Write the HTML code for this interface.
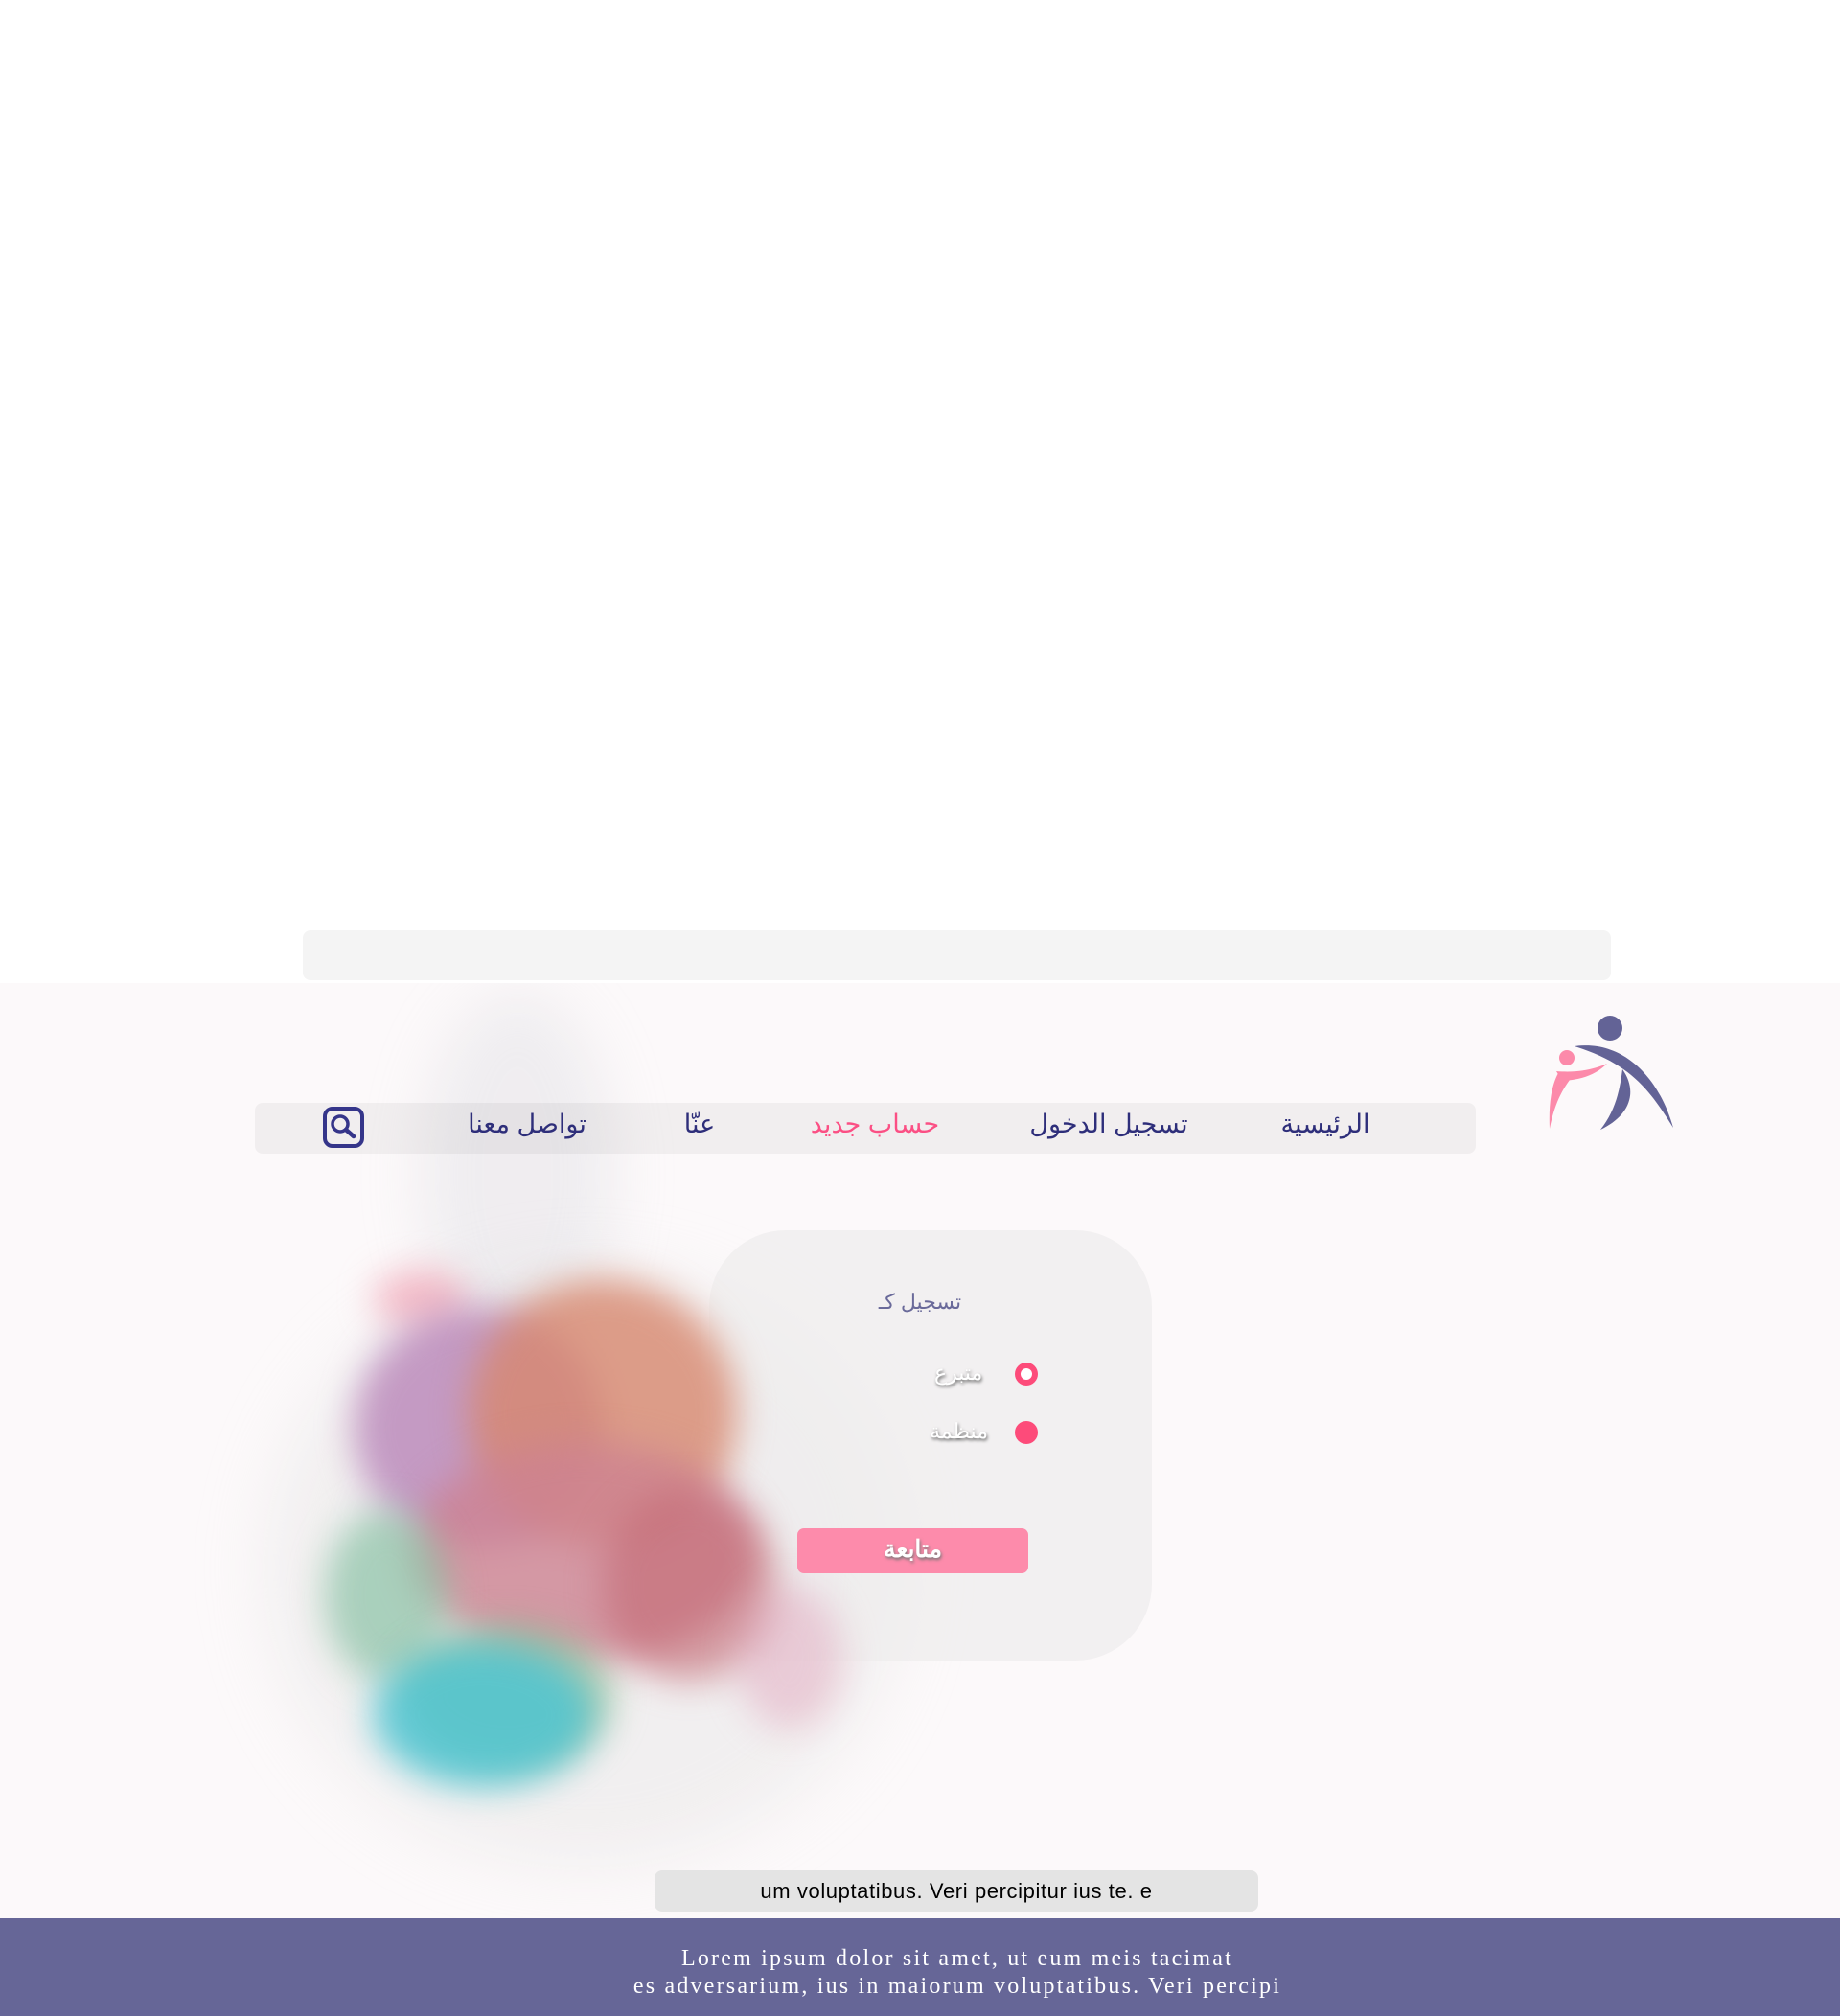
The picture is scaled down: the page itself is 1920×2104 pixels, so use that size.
<!DOCTYPE html>
<html><head><meta charset="utf-8">
<style>
html,body{margin:0;padding:0;}
body{width:1920px;height:2104px;position:relative;background:#fff;overflow:hidden;font-family:"Liberation Sans","Noto Sans CJK SC",sans-serif;}
.abs{position:absolute;}
.pat{left:0;top:1026px;width:1920px;height:976px;background:#fcf9fa;overflow:hidden;}
.nav a{position:absolute;top:1158px;font-size:27px;color:#2e2e7a;text-decoration:none;transform:translateX(-50%);white-space:nowrap;direction:rtl;}
.blob{position:absolute;border-radius:50%;filter:blur(18px);}
</style></head><body>
<div class="abs" style="left:316px;top:971px;width:1365px;height:52px;background:#f4f4f4;border-radius:8px;"></div>
<div class="abs pat">
 <div class="blob" style="left:440px;top:10px;width:200px;height:380px;background:rgba(205,205,210,.25);filter:blur(30px)"></div>
 <div class="blob" style="left:280px;top:300px;width:660px;height:620px;background:rgba(220,220,222,.35);filter:blur(35px)"></div>
</div>
<!-- nav -->
<div class="abs" style="left:266px;top:1151px;width:1274px;height:53px;background:rgba(0,0,0,.045);border-radius:8px;"></div>
<div class="nav">
 <a style="left:1383px">الرئيسية</a>
 <a style="left:1157px">تسجيل الدخول</a>
 <a style="left:913px;color:#fb4f84">حساب جديد</a>
 <a style="left:730px">عنّا</a>
 <a style="left:550px">تواصل معنا</a>
</div>
<svg class="abs" style="left:337px;top:1155px" width="43" height="43" viewBox="0 0 43 43">
 <rect x="2" y="2" width="39" height="39" rx="8" fill="none" stroke="#35358a" stroke-width="4"/>
 <circle cx="18" cy="18" r="8" fill="none" stroke="#35358a" stroke-width="3.5"/>
 <path d="M24 24 L32 31" stroke="#35358a" stroke-width="4.5" stroke-linecap="round"/>
</svg>
<!-- logo -->
<svg class="abs" style="left:1580px;top:1040px" width="200" height="160" viewBox="0 0 200 160">
 <circle cx="100" cy="33" r="13" fill="#636396"/>
 <path d="M63 52 C110 45 150 80 166 137 C140 95 120 70 63 52 Z" fill="#636396"/>
 <path d="M113 76 C130 100 120 125 90 139 C105 120 110 100 113 76 Z" fill="#636396"/>
 <circle cx="55" cy="64" r="8" fill="#fc8aaa"/>
 <path d="M44 78 C70 80 85 75 97 70 C85 82 70 87 50 88 Z" fill="#fc8aaa"/>
 <path d="M46 80 C38 95 36 115 37 138 C42 112 50 98 58 87 Z" fill="#fc8aaa"/>
</svg>
<!-- card -->
<div class="abs" style="left:740px;top:1284px;width:462px;height:449px;background:rgba(238,237,237,.7);border-radius:80px;"></div>
<!-- photo splash -->
<div class="abs" style="left:269px;top:1275px;width:700px;height:610px;">
 <div class="blob" style="left:120px;top:50px;width:100px;height:60px;background:rgba(240,150,170,.6);"></div>
 <div class="blob" style="left:100px;top:90px;width:260px;height:250px;background:rgba(180,125,180,.75);"></div>
 <div class="blob" style="left:220px;top:60px;width:280px;height:280px;background:rgba(215,135,110,.8);"></div>
 <div class="blob" style="left:160px;top:230px;width:360px;height:230px;background:rgba(205,130,145,.8);"></div>
 <div class="blob" style="left:70px;top:300px;width:130px;height:180px;background:rgba(130,190,160,.65);"></div>
 <div class="blob" style="left:150px;top:420px;width:220px;height:150px;background:rgba(150,190,150,.7);"></div>
 <div class="blob" style="left:120px;top:440px;width:230px;height:150px;background:rgba(70,195,210,.8);"></div>
 <div class="blob" style="left:360px;top:280px;width:180px;height:200px;background:rgba(195,105,115,.6);"></div>
 <div class="blob" style="left:500px;top:380px;width:110px;height:150px;background:rgba(225,160,185,.45);"></div>
</div>
<div class="abs" style="left:960px;top:1346px;transform:translateX(-50%);direction:rtl;font-size:22px;color:#6a6a9a;">تسجيل كـ</div>
<div class="abs" style="left:1059px;top:1422px;width:24px;height:24px;border-radius:50%;background:#fd4b7a;"><div style="margin:6px;width:12px;height:12px;border-radius:50%;background:#fff"></div></div>
<div class="abs" style="left:1059px;top:1483px;width:24px;height:24px;border-radius:50%;background:#fd4b7a;"></div>
<div class="abs" style="left:975px;top:1420px;font-size:22px;color:#fff;text-shadow:1px 2px 3px #666;direction:rtl">متبرع</div>
<div class="abs" style="left:970px;top:1481px;font-size:22px;color:#fff;text-shadow:1px 2px 3px #666;direction:rtl">منظمة</div>
<div class="abs" style="left:832px;top:1595px;width:241px;height:47px;background:#fd8bab;border-radius:7px;color:#fff;font-size:25px;font-weight:bold;text-align:center;line-height:45px;text-shadow:1px 2px 3px #777;direction:rtl">متابعة</div>
<!-- bottom box -->
<div class="abs" style="left:683px;top:1952px;width:630px;height:43px;background:#e4e4e4;border-radius:8px;text-align:center;line-height:43px;font-size:22px;color:#000;letter-spacing:0.6px">um voluptatibus. Veri percipitur ius te. e</div>
<div class="abs" style="left:0;top:2002px;width:1920px;height:102px;background:#666697;color:#fff;font-family:'Liberation Serif',serif;font-size:24px;letter-spacing:2.2px;text-align:center;line-height:29px;padding-top:28px;padding-left:78px;box-sizing:border-box">Lorem ipsum dolor sit amet, ut eum meis tacimat<br>es adversarium, ius in maiorum voluptatibus. Veri percipi</div>
</body></html>
